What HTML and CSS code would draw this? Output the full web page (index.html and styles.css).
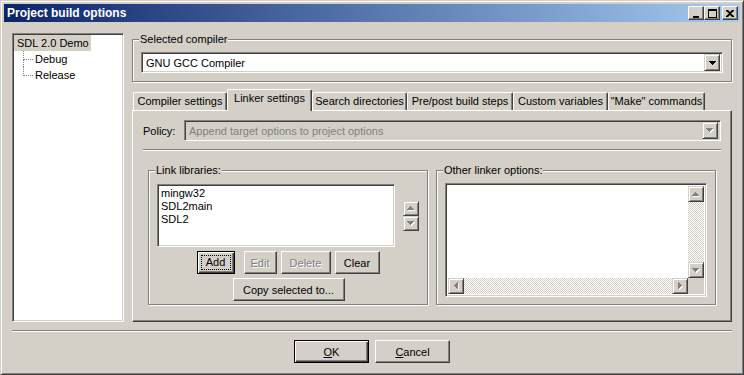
FILE: index.html
```html
<!DOCTYPE html>
<html lang="en">
<head>
    <meta charset="UTF-8">
    <title>Project build options</title>
    <link rel="stylesheet" href="styles.css">
</head>
<body>
    <div class="window">
        <div class="titlebar">
            <span class="title">Project build options</span>
            <div class="caption-buttons">
                <span class="cap-btn"><svg width="8" height="9"><path d="M1 7h6v2H1z"/></svg></span>
                <span class="cap-btn"><svg width="9" height="9"><path d="M0 0h9v2H0zM0 2h1v7H0zM8 2h1v7H8zM1 8h7v1H1z"/></svg></span>
                <span class="cap-btn cap-close"><svg width="8" height="7"><path d="M0 0h2l2 2 2-2h2v1L5 3.5 8 6v1H6L4 5 2 7H0V6l3-2.5L0 1z"/></svg></span>
            </div>
        </div>

        <div class="client">
            <div class="main">
                <!-- Arbol de targets -->
                <div class="tree sunken">
                    <div class="node"><span class="selected">SDL 2.0 Demo</span></div>
                    <ul class="children">
                        <li>Debug</li>
                        <li>Release</li>
                    </ul>
                </div>

                <div class="right">
                    <fieldset class="group compiler-group">
                        <legend>Selected compiler</legend>
                        <div class="combo sunken">
                            <span class="combo-text">GNU GCC Compiler</span>
                            <span class="combo-btn"><svg width="7" height="4"><path d="M0 0h7v1H0zM1 1h5v1H1zM2 2h3v1H2zM3 3h1v1H3z"/></svg></span>
                        </div>
                    </fieldset>

                    <div class="tabs">
                        <span class="tab tab-compiler">Compiler settings</span>
                        <span class="tab tab-linker active">Linker settings</span>
                        <span class="tab tab-search">Search directories</span>
                        <span class="tab tab-steps">Pre/post build steps</span>
                        <span class="tab tab-vars">Custom variables</span>
                        <span class="tab tab-make">"Make" commands</span>
                    </div>

                    <div class="tab-panel">
                        <div class="policy-row">
                            <label class="policy-label">Policy:</label>
                            <div class="combo sunken disabled">
                                <span class="combo-text">Append target options to project options</span>
                                <span class="combo-btn"><svg width="8" height="5"><path fill="#fff" d="M1 1h7v1H1zM2 2h5v1H2zM3 3h3v1H3zM4 4h1v1H4z"/><path fill="#808080" d="M0 0h7v1H0zM1 1h5v1H1zM2 2h3v1H2zM3 3h1v1H3z"/></svg></span>
                            </div>
                        </div>
                        <div class="hline"></div>

                        <div class="groups">
                            <fieldset class="group libs-group">
                                <legend>Link libraries:</legend>
                                <div class="libs-row">
                                    <div class="listbox sunken">
                                        <div>mingw32</div>
                                        <div>SDL2main</div>
                                        <div>SDL2</div>
                                    </div>
                                    <div class="spin">
                                        <span class="small-btn"><svg width="8" height="5"><path fill="#fff" d="M4 1h1v1H4zM3 2h3v1H3zM2 3h5v1H2zM1 4h7v1H1z"/><path fill="#808080" d="M3 0h1v1H3zM2 1h3v1H2zM1 2h5v1H1zM0 3h7v1H0z"/></svg></span>
                                        <span class="small-btn"><svg width="8" height="5"><path fill="#fff" d="M1 1h7v1H1zM2 2h5v1H2zM3 3h3v1H3zM4 4h1v1H4z"/><path fill="#808080" d="M0 0h7v1H0zM1 1h5v1H1zM2 2h3v1H2zM3 3h1v1H3z"/></svg></span>
                                    </div>
                                </div>
                                <div class="lib-buttons">
                                    <button class="btn default btn-add"><span class="focus">Add</span></button>
                                    <button class="btn btn-edit" disabled>Edit</button>
                                    <button class="btn btn-delete" disabled>Delete</button>
                                    <button class="btn btn-clear">Clear</button>
                                </div>
                                <div class="lib-buttons">
                                    <button class="btn btn-copy">Copy selected to...</button>
                                </div>
                            </fieldset>

                            <fieldset class="group other-group">
                                <legend>Other linker options:</legend>
                                <div class="textarea sunken">
                                    <div class="text-area"></div>
                                    <div class="vscroll">
                                        <span class="scroll-btn"><svg width="8" height="5"><path fill="#fff" d="M4 1h1v1H4zM3 2h3v1H3zM2 3h5v1H2zM1 4h7v1H1z"/><path fill="#808080" d="M3 0h1v1H3zM2 1h3v1H2zM1 2h5v1H1zM0 3h7v1H0z"/></svg></span>
                                        <span class="track"></span>
                                        <span class="scroll-btn"><svg width="8" height="5"><path fill="#fff" d="M1 1h7v1H1zM2 2h5v1H2zM3 3h3v1H3zM4 4h1v1H4z"/><path fill="#808080" d="M0 0h7v1H0zM1 1h5v1H1zM2 2h3v1H2zM3 3h1v1H3z"/></svg></span>
                                    </div>
                                    <div class="hscroll">
                                        <span class="scroll-btn"><svg width="5" height="8"><path fill="#fff" d="M1 4h1v1H1zM2 3h1v3H2zM3 2h1v5H3zM4 1h1v7H4z"/><path fill="#808080" d="M0 3h1v1H0zM1 2h1v3H1zM2 1h1v5H2zM3 0h1v7H3z"/></svg></span>
                                        <span class="track"></span>
                                        <span class="scroll-btn"><svg width="5" height="8"><path fill="#fff" d="M4 4h1v1H4zM3 3h1v3H3zM2 2h1v5H2zM1 1h1v7H1z"/><path fill="#808080" d="M3 3h1v1H3zM2 2h1v3H2zM1 1h1v5H1zM0 0h1v7H0z"/></svg></span>
                                    </div>
                                    <div class="corner"></div>
                                </div>
                            </fieldset>
                        </div>
                    </div>
                </div>
            </div>

            <div class="separator"></div>

            <div class="dialog-buttons">
                <button class="btn default btn-dialog"><u>O</u>K</button>
                <button class="btn btn-dialog"><u>C</u>ancel</button>
            </div>
        </div>
    </div>
</body>
</html>
```

FILE: styles.css
```css
* {
    box-sizing: border-box;
}
body {
    margin: 0;
    background-color: #d4d0c8;
    font-family: "Liberation Sans", Arial, sans-serif;
    font-size: 11px;
    color: #000;
}
.window {
    width: 744px;
    height: 375px;
    border: 1px solid;
    border-color: #d4d0c8 #404040 #404040 #d4d0c8;
    box-shadow: inset 1px 1px #fff, inset -1px -1px #808080;
    padding: 3px;
    display: flex;
    flex-direction: column;
}

/* Barra de titulo */
.titlebar {
    height: 18px;
    background: linear-gradient(to right, #0a246a, #a6caf0);
    display: flex;
    align-items: center;
    justify-content: space-between;
    padding: 0 2px 0 3px;
}
.title {
    color: #fff;
    font-weight: bold;
    font-size: 12px;
}
.caption-buttons {
    display: flex;
}
.cap-btn {
    width: 16px;
    height: 14px;
    background: #d4d0c8;
    border: 1px solid;
    border-color: #fff #404040 #404040 #fff;
    box-shadow: inset -1px -1px #808080;
    display: flex;
    align-items: center;
    justify-content: center;
}
.cap-close {
    margin-left: 2px;
}

/* Area cliente */
.client {
    flex: 1;
    padding: 11px 8px 0 8px;
}
.main {
    display: flex;
    gap: 8px;
    height: 289px;
}
.sunken {
    border: 1px solid;
    border-color: #808080 #fff #fff #808080;
    box-shadow: inset 1px 1px #404040, inset -1px -1px #d4d0c8;
}
.tree {
    width: 112px;
    background: #fff;
    padding: 1px 1px;
}
.node {
    height: 16px;
    line-height: 16px;
    white-space: nowrap;
}
.node .selected {
    display: inline-block;
    background: #d4d0c8;
    padding: 0 2px 0 3px;
}
.children {
    list-style: none;
    margin: 0 0 0 9px;
    padding: 0;
}
.children li {
    position: relative;
    height: 16px;
    line-height: 16px;
    padding-left: 12px;
}
.children li::before {
    content: '';
    position: absolute;
    left: 0;
    top: 0;
    width: 9px;
    height: 8px;
    border-left: 1px dotted #808080;
    border-bottom: 1px dotted #808080;
}
.children li:not(:last-child)::after {
    content: '';
    position: absolute;
    left: 0;
    top: 8px;
    height: 8px;
    border-left: 1px dotted #808080;
}

.right {
    width: 600px;
    display: flex;
    flex-direction: column;
}

/* Group box */
.group {
    margin: 0;
    min-width: 0;
    border: 1px solid #808080;
    box-shadow: 1px 1px #fff, inset 1px 1px #fff;
}
.group legend {
    padding: 0 1px;
    margin-left: -2px;
    line-height: 13px;
    background: #d4d0c8;
}
.compiler-group {
    height: 49px;
    padding: 6px 8px 0 8px;
}

/* Combo box */
.combo {
    height: 21px;
    background: #fff;
    display: flex;
    align-items: center;
    padding: 2px;
}
.combo-text {
    flex: 1;
    padding-left: 2px;
}
.combo-btn {
    width: 16px;
    height: 17px;
    background: #d4d0c8;
    border: 1px solid;
    border-color: #d4d0c8 #404040 #404040 #d4d0c8;
    box-shadow: inset 1px 1px #fff, inset -1px -1px #808080;
    display: flex;
    align-items: center;
    justify-content: center;
}
.combo.disabled {
    background: #d4d0c8;
}
.combo.disabled .combo-text {
    color: #808080;
}

/* Pestañas */
.tabs {
    display: flex;
    align-items: flex-end;
    height: 21px;
    margin-top: 7px;
    padding-left: 1px;
}
.tab {
    height: 18px;
    line-height: 15px;
    padding-top: 1px;
    text-align: center;
    background: #d4d0c8;
    border-top: 1px solid #fff;
    border-left: 1px solid #fff;
    border-right: 1px solid #404040;
    box-shadow: inset -1px 0 #808080;
    border-radius: 2px 2px 0 0;
    white-space: nowrap;
}
.tab.active {
    position: relative;
    z-index: 1;
    height: 22px;
    margin-bottom: -1px;
}
.tab-compiler {
    width: 94px;
}
.tab-linker {
    width: 85px;
}
.tab-search {
    width: 95px;
}
.tab-steps {
    width: 106px;
}
.tab-vars {
    width: 95px;
}
.tab-make {
    width: 97px;
}
.tab-panel {
    height: 212px;
    border: 1px solid;
    border-color: #fff #404040 #404040 #fff;
    box-shadow: inset -1px -1px #808080;
    padding: 9px 10px 0 10px;
}

.policy-row {
    display: flex;
    align-items: center;
}
.policy-label {
    width: 41px;
}
.policy-row .combo {
    flex: 1;
}
.hline {
    margin-top: 8px;
    border-top: 1px solid #808080;
    border-bottom: 1px solid #fff;
}

.groups {
    display: flex;
    gap: 8px;
    margin-top: 13px;
    padding: 0 5px;
}
.groups .group {
    width: 280px;
    height: 141px;
}
.libs-group {
    padding: 7px 8px 0 8px;
}
.libs-row {
    display: flex;
    align-items: center;
}
.listbox {
    width: 238px;
    height: 63px;
    background: #fff;
    padding: 2px 3px;
    line-height: 13px;
}
.spin {
    display: flex;
    flex-direction: column;
    margin-left: 8px;
}
.small-btn, .scroll-btn {
    width: 16px;
    height: 15px;
    background: #d4d0c8;
    border: 1px solid;
    border-color: #d4d0c8 #404040 #404040 #d4d0c8;
    box-shadow: inset 1px 1px #fff, inset -1px -1px #808080;
    display: flex;
    align-items: center;
    justify-content: center;
}
.scroll-btn {
    height: 16px;
}

/* Botones */
.btn {
    height: 23px;
    padding: 0;
    font-family: inherit;
    font-size: 11px;
    color: #000;
    background: #d4d0c8;
    border: 1px solid;
    border-color: #fff #404040 #404040 #fff;
    box-shadow: inset -1px -1px #808080;
}
.btn.default {
    border: 1px solid #000;
    box-shadow: inset 1px 1px #fff, inset -1px -1px #404040, inset -2px -2px #808080;
}
.btn:disabled {
    color: #808080;
    text-shadow: 1px 1px #fff;
}
.lib-buttons {
    display: flex;
    justify-content: center;
    gap: 4px;
    margin-top: 4px;
}
.btn-add {
    width: 38px;
    margin-right: 5px;
    padding: 3px;
}
.focus {
    display: block;
    height: 100%;
    line-height: 13px;
    border: 1px dotted #000;
}
.btn-edit {
    width: 33px;
}
.btn-delete {
    width: 50px;
}
.btn-clear {
    width: 45px;
}
.btn-copy {
    width: 112px;
    margin-left: 1px;
}

.other-group {
    padding: 6px 8px 0 8px;
}
.textarea {
    height: 114px;
    padding: 2px;
    display: grid;
    grid-template-columns: 1fr 16px;
    grid-template-rows: 1fr 16px;
    background: #fff;
}
.vscroll {
    display: flex;
    flex-direction: column;
}
.hscroll {
    display: flex;
}
.track {
    flex: 1;
    background: repeating-conic-gradient(#fff 0 25%, #d4d0c8 0 50%) 0 0 / 2px 2px;
}
.corner {
    background: #d4d0c8;
}

.separator {
    margin-top: 8px;
    border-top: 1px solid #808080;
    border-bottom: 1px solid #fff;
}
.dialog-buttons {
    display: flex;
    justify-content: center;
    gap: 6px;
    margin-top: 8px;
}
.btn-dialog {
    width: 75px;
}
```
